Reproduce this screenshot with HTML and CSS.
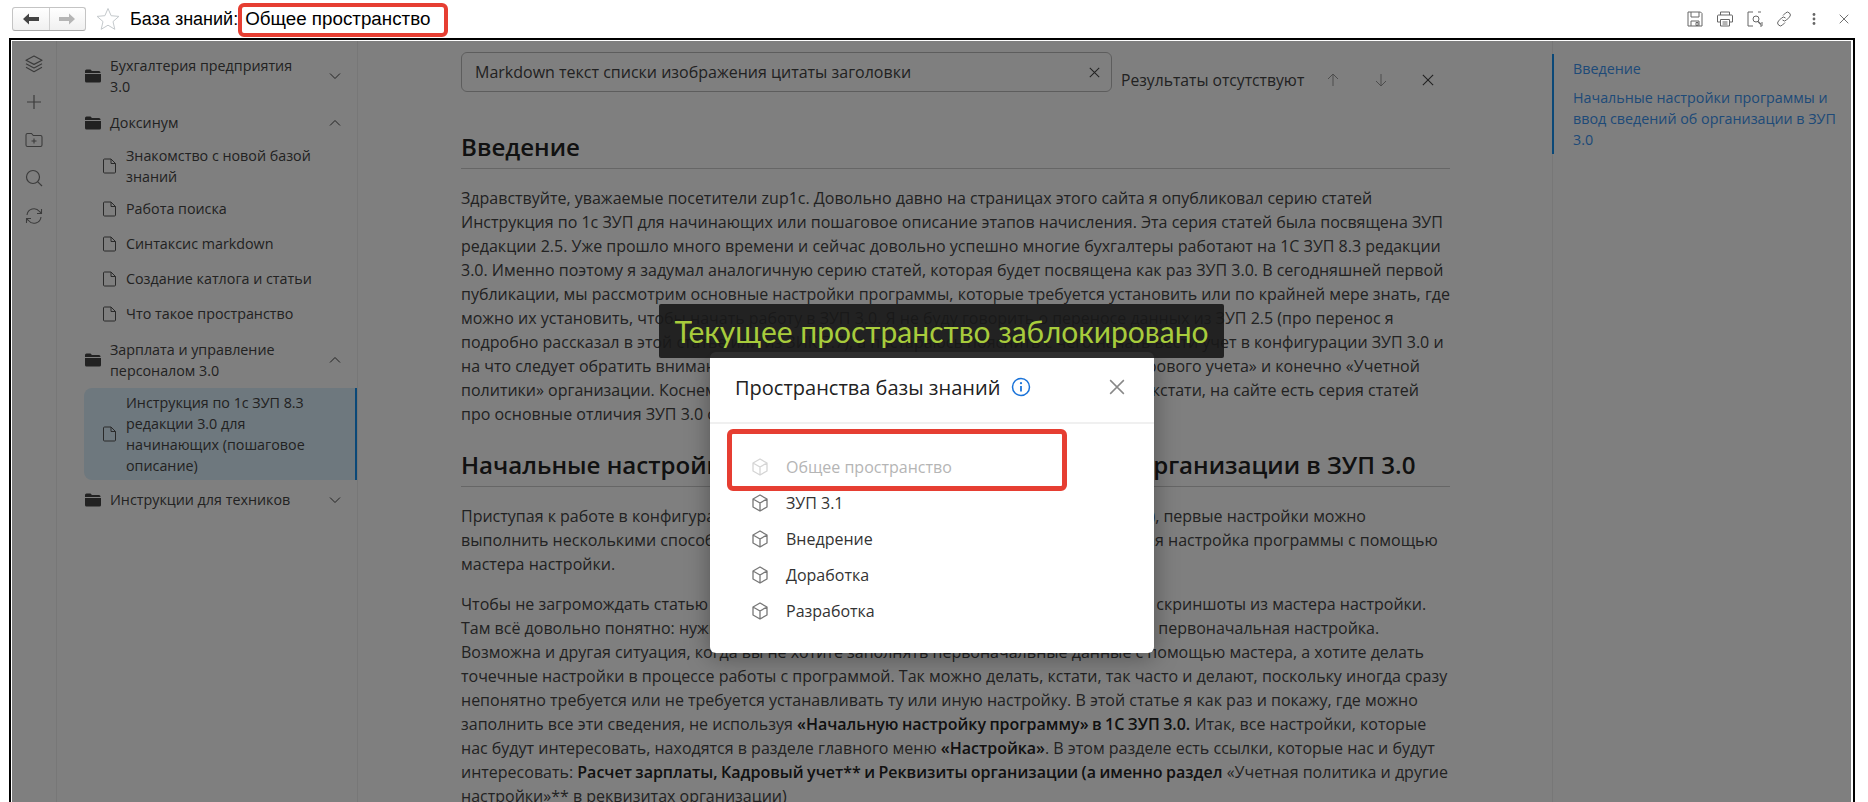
FILE: index.html
```html
<!DOCTYPE html>
<html lang="ru">
<head>
    <meta charset="UTF-8">
    <title>База знаний: Общее пространство</title>
    <link rel="stylesheet" href="styles.css">
</head>
<body>
    <svg class="icon-defs" width="0" height="0">
        <symbol id="i-folder" viewBox="0 0 16 14"><path d="M0 2a1.500 1.500 0 0 1 1.500-1.500h4l1.500 1.500h7a1.500 1.500 0 0 1 1.500 1.500v.5h-15.500z M0 5h16v7a1.500 1.500 0 0 1-1.500 1.500h-13a1.500 1.500 0 0 1-1.500-1.500z" fill="currentColor"/></symbol>
        <symbol id="i-doc" viewBox="0 0 14 16"><path d="M1.500 1h6.500l4.500 4.500v8.500a1 1 0 0 1-1 1h-10a1 1 0 0 1-1-1v-12a1 1 0 0 1 1-1z M8 1v4.500h4.500" fill="none" stroke="currentColor" stroke-width="1"/></symbol>
        <symbol id="i-down" viewBox="0 0 12 8"><path d="M1 1.500l5 5 5-5" fill="none" stroke="currentColor" stroke-width="1"/></symbol>
        <symbol id="i-up" viewBox="0 0 12 8"><path d="M1 6.500l5-5 5 5" fill="none" stroke="currentColor" stroke-width="1"/></symbol>
        <symbol id="i-cube" viewBox="0 0 18 18"><path d="M9 1l7 4v8l-7 4-7-4v-8z M2 5l7 4 7-4 M9 9v8" fill="none" stroke="currentColor" stroke-width="1.300" stroke-linejoin="round"/></symbol>
        <symbol id="i-x" viewBox="0 0 14 14"><path d="M1 1l12 12M13 1l-12 12" fill="none" stroke="currentColor" stroke-width="1.300"/></symbol>
    </svg>

    <header class="toolbar">
        <div class="nav-buttons">
            <button class="nav-btn nav-back"><svg width="16" height="12" viewBox="0 0 16 12"><path d="M0 6l6-5.500v3.500h10v4h-10v3.500z" fill="currentColor"/></svg></button>
            <button class="nav-btn nav-forward"><svg width="16" height="12" viewBox="0 0 16 12"><path d="M16 6l-6-5.500v3.500h-10v4h10v3.500z" fill="currentColor"/></svg></button>
        </div>
        <svg class="star" width="24" height="24" viewBox="0 0 24 24"><path d="M12 1.500l3.100 7.200 7.800.7-5.900 5.200 1.800 7.700-6.800-4.100-6.800 4.100 1.800-7.700-5.900-5.200 7.800-.7z" fill="none" stroke="#c4c9cc" stroke-width="1"/></svg>
        <div class="page-title">База знаний: <span class="title-space">Общее пространство</span></div>
        <div class="toolbar-actions">
            <svg width="16" height="16" viewBox="0 0 16 16"><path d="M1 1h12.500l1.500 1.500v12.500h-14z M4 1v5h8v-5 M4 15v-5h8v5 M9 11.500h2v3h-2z" fill="none" stroke="#666" stroke-width="1"/></svg>
            <svg width="18" height="16" viewBox="0 0 18 16"><path d="M4.500 4v-3h9v3 M4.500 11h-3v-6a1 1 0 0 1 1-1h13a1 1 0 0 1 1 1v6h-3 M4.500 8.500h9v6.500h-9z M6.500 11h5M6.500 13h5" fill="none" stroke="#666" stroke-width="1"/></svg>
            <svg width="16" height="16" viewBox="0 0 16 16"><path d="M6 1h-5v14h5 M11 1h3 M15 11v4h-2" fill="none" stroke="#666" stroke-width="1"/><circle cx="9" cy="8" r="3" fill="none" stroke="#666"/><path d="M11 10.500l3 3" stroke="#666" stroke-width="1.400"/></svg>
            <svg width="16" height="16" viewBox="0 0 16 16"><path d="M7 4.500l2.500-2.500a2.800 2.800 0 0 1 4 4l-3 3a2.800 2.800 0 0 1-4 0 M9 11.500l-2.500 2.500a2.800 2.800 0 0 1-4-4l3-3a2.800 2.800 0 0 1 4 0" fill="none" stroke="#666" stroke-width="1"/></svg>
            <svg class="action-dots" width="4" height="12" viewBox="0 0 4 12"><circle cx="2" cy="1.500" r="1.400" fill="#666"/><circle cx="2" cy="6" r="1.400" fill="#666"/><circle cx="2" cy="10.500" r="1.400" fill="#666"/></svg>
            <svg class="action-close" width="10" height="10"><use href="#i-x"/></svg>
        </div>
    </header>

    <div class="frame">
        <nav class="rail">
            <svg width="20" height="20" viewBox="0 0 20 20"><path d="M10 2l8 4.200-8 4.200-8-4.200z M2 9.800l8 4.200 8-4.200 M2 13.200l8 4.500 8-4.500" fill="none" stroke="currentColor" stroke-width="1.200" stroke-linejoin="round"/></svg>
            <svg width="20" height="20" viewBox="0 0 20 20"><path d="M10 3v14M3 10h14" fill="none" stroke="currentColor" stroke-width="1.200"/></svg>
            <svg width="20" height="20" viewBox="0 0 20 20"><path d="M2 5a1.500 1.500 0 0 1 1.500-1.500h4l1.800 2h7.200a1.500 1.500 0 0 1 1.500 1.500v8a1.500 1.500 0 0 1-1.500 1.500h-13a1.500 1.500 0 0 1-1.500-1.500z M10 8.500v5M7.500 11h5" fill="none" stroke="currentColor" stroke-width="1.100"/></svg>
            <svg width="20" height="20" viewBox="0 0 20 20"><circle cx="9" cy="9" r="6.500" fill="none" stroke="currentColor" stroke-width="1.200"/><path d="M13.800 13.800l4.200 4.200" stroke="currentColor" stroke-width="1.200"/></svg>
            <svg width="20" height="20" viewBox="0 0 20 20"><path d="M3 9a7 7 0 0 1 12.500-3.500l2 2 M17.500 3v4.500h-4.500 M17 11a7 7 0 0 1-12.500 3.500l-2-2 M2.500 17v-4.500h4.500" fill="none" stroke="currentColor" stroke-width="1.100"/></svg>
        </nav>

        <aside class="tree">
            <div class="tree-group">
                <div class="tree-row folder">
                    <svg class="folder-icon"><use href="#i-folder"/></svg>
                    <span class="row-text">Бухгалтерия предприятия 3.0</span>
                    <svg class="chevron"><use href="#i-down"/></svg>
                </div>
            </div>
            <div class="tree-group">
                <div class="tree-row folder">
                    <svg class="folder-icon"><use href="#i-folder"/></svg>
                    <span class="row-text">Доксинум</span>
                    <svg class="chevron"><use href="#i-up"/></svg>
                </div>
                <div class="tree-row leaf">
                    <svg class="doc-icon"><use href="#i-doc"/></svg>
                    <span class="row-text">Знакомство с новой базой знаний</span>
                </div>
                <div class="tree-row leaf">
                    <svg class="doc-icon"><use href="#i-doc"/></svg>
                    <span class="row-text">Работа поиска</span>
                </div>
                <div class="tree-row leaf">
                    <svg class="doc-icon"><use href="#i-doc"/></svg>
                    <span class="row-text">Синтаксис markdown</span>
                </div>
                <div class="tree-row leaf">
                    <svg class="doc-icon"><use href="#i-doc"/></svg>
                    <span class="row-text">Создание катлога и статьи</span>
                </div>
                <div class="tree-row leaf">
                    <svg class="doc-icon"><use href="#i-doc"/></svg>
                    <span class="row-text">Что такое пространство</span>
                </div>
            </div>
            <div class="tree-group">
                <div class="tree-row folder">
                    <svg class="folder-icon"><use href="#i-folder"/></svg>
                    <span class="row-text">Зарплата и управление персоналом 3.0</span>
                    <svg class="chevron"><use href="#i-up"/></svg>
                </div>
                <div class="tree-row leaf active">
                    <svg class="doc-icon"><use href="#i-doc"/></svg>
                    <span class="row-text">Инструкция по 1с ЗУП 8.3 редакции 3.0 для начинающих (пошаговое описание)</span>
                </div>
            </div>
            <div class="tree-group">
                <div class="tree-row folder">
                    <svg class="folder-icon"><use href="#i-folder"/></svg>
                    <span class="row-text">Инструкции для техников</span>
                    <svg class="chevron"><use href="#i-down"/></svg>
                </div>
            </div>
        </aside>

        <main class="article">
            <div class="search-row">
                <div class="search-input">
                    <span>Markdown текст списки изображения цитаты заголовки</span>
                    <svg class="search-x"><use href="#i-x"/></svg>
                </div>
                <div class="search-result">
                    <span class="result-text">Результаты отсутствуют</span>
                    <svg class="arrow" width="12" height="14" viewBox="0 0 12 14"><path d="M6 13v-12M1 6l5-5 5 5" fill="none" stroke="currentColor"/></svg>
                    <svg class="arrow arrow-down" width="12" height="14" viewBox="0 0 12 14"><path d="M6 1v12M1 8l5 5 5-5" fill="none" stroke="currentColor"/></svg>
                    <svg class="result-x"><use href="#i-x"/></svg>
                </div>
            </div>

            <h2>Введение</h2>
            <p>Здравствуйте, уважаемые посетители zup1c. Довольно давно на страницах этого сайта я опубликовал серию статей Инструкция по 1с ЗУП для начинающих или пошаговое описание этапов начисления. Эта серия статей была посвящена ЗУП редакции 2.5. Уже прошло много времени и сейчас довольно успешно многие бухгалтеры работают на 1С ЗУП 8.3 редакции 3.0. Именно поэтому я задумал аналогичную серию статей, которая будет посвящена как раз ЗУП 3.0. В сегодняшней первой публикации, мы рассмотрим основные настройки программы, которые требуется установить или по крайней мере знать, где можно их установить, чтобы начать работу в ЗУП 3.0. Я не буду говорить о переносе данных из ЗУП 2.5 (про перенос я подробно рассказал в этой статье или из ЗИК 7.7), а постараюсь пояснить с чего начать вести учет в конфигурации ЗУП 3.0 и на что следует обратить внимание при заполнении настроек «Расчета зарплаты», «Кадрового учета» и конечно «Учетной политики» организации. Коснемся также и ряда отличий настроек от ЗУП 2.5 и ЗУП 3.0 (кстати, на сайте есть серия статей про основные отличия ЗУП 3.0 от ЗУП 2.5).</p>

            <h2>Начальные настройки программы и ввод сведений об организации в ЗУП 3.0</h2>
            <p>Приступая к работе в конфигурации ЗУП 3.0 (в этой статье рассматривается релиз 3.1.0.), первые настройки можно выполнить несколькими способами. Самый очевидный вариант сейчас — это начальная настройка программы с помощью мастера настройки.</p>
            <p>Чтобы не загромождать статью лишним, я не стану здесь приводить и комментировать скриншоты из мастера настройки. Там всё довольно понятно: нужно просто идти по шагам, и в итоге будет выполнена эта первоначальная настройка. Возможна и другая ситуация, когда вы не хотите заполнять первоначальные данные с помощью мастера, а хотите делать точечные настройки в процессе работы с программой. Так можно делать, кстати, так часто и делают, поскольку иногда сразу непонятно требуется или не требуется устанавливать ту или иную настройку. В этой статье я как раз и покажу, где можно заполнить все эти сведения, не используя <strong>«Начальную настройку программу» в 1С ЗУП 3.0.</strong> Итак, все настройки, которые нас будут интересовать, находятся в разделе главного меню <strong>«Настройка»</strong>. В этом разделе есть ссылки, которые нас и будут интересовать: <strong>Расчет зарплаты, Кадровый учет** и Реквизиты организации (а именно раздел</strong> «Учетная политика и другие настройки»** в реквизитах организации)</p>
        </main>

        <aside class="toc">
            <div class="toc-list">
                <div class="toc-link">Введение</div>
                <div class="toc-link">Начальные настройки программы и ввод сведений об организации в ЗУП 3.0</div>
            </div>
        </aside>

        <div class="overlay"></div>
    </div>

    <div class="modal">
        <div class="modal-head">
            <span class="modal-title">Пространства базы знаний</span>
            <svg class="info-icon" width="20" height="20" viewBox="0 0 20 20"><circle cx="10" cy="10" r="8.500" fill="none" stroke="#1a73d9" stroke-width="1.500"/><path d="M10 9v5.500" stroke="#1a73d9" stroke-width="1.800"/><circle cx="10" cy="6.200" r="1.100" fill="#1a73d9"/></svg>
            <svg class="modal-close"><use href="#i-x"/></svg>
        </div>
        <div class="space-list">
            <div class="space-row locked"><svg class="cube"><use href="#i-cube"/></svg>Общее пространство</div>
            <div class="space-row"><svg class="cube"><use href="#i-cube"/></svg>ЗУП 3.1</div>
            <div class="space-row"><svg class="cube"><use href="#i-cube"/></svg>Внедрение</div>
            <div class="space-row"><svg class="cube"><use href="#i-cube"/></svg>Доработка</div>
            <div class="space-row"><svg class="cube"><use href="#i-cube"/></svg>Разработка</div>
        </div>
        <div class="space-mark"></div>
    </div>

    <div class="banner">Текущее пространство заблокировано</div>
    <div class="title-mark"></div>
</body>
</html>
```

FILE: styles.css
```css
html, body {
    margin: 0;
    height: 100%;
}

body {
    position: relative;
    height: 802px;
    overflow: hidden;
    background: #fff;
    font-family: "Open Sans", sans-serif;
    font-size: 16px;
    color: #3a3a3a;
}

.icon-defs {
    position: absolute;
}

/* top bar */
.toolbar {
    display: flex;
    align-items: center;
    height: 38px;
    padding: 0 19px 0 12px;
    box-sizing: border-box;
}

.nav-buttons {
    display: flex;
    width: 74px;
    height: 24px;
    box-sizing: border-box;
    border: 1px solid #c4c4c4;
    border-bottom-color: #a8a8a8;
    border-radius: 3px;
    background: linear-gradient(#fff, #f0f0f0);
}

.nav-btn {
    flex: 1;
    display: flex;
    align-items: center;
    justify-content: center;
    padding: 0;
    border: none;
    background: none;
}

.nav-back {
    color: #444;
    border-right: 1px solid #cfcfcf;
}

.nav-forward {
    color: #b5b5b5;
}

.star {
    margin-left: 10px;
}

.page-title {
    margin-left: 10px;
    font-family: "Liberation Sans", sans-serif;
    font-size: 18px;
    color: #000;
    white-space: pre;
}

.title-space {
    margin-left: 2px;
    font-size: 18.8px;
}

.toolbar-actions {
    margin-left: auto;
    display: flex;
    align-items: center;
    gap: 13px;
}

.action-dots {
    margin-left: 7px;
}

.action-close {
    margin-left: 10px;
    color: #666;
}

/* frame with dimmed page */
.frame {
    position: relative;
    display: flex;
    margin-left: 9px;
    width: 1846px;
    height: 790px;
    box-sizing: border-box;
    border: 2px solid #000;
    padding: 1px;
}

.overlay {
    position: absolute;
    inset: 1px 2px 1px 1px;
    background: rgba(0, 0, 0, 0.5);
}

.rail {
    flex: none;
    width: 45px;
    box-sizing: border-box;
    padding-top: 13px;
    border-right: 1px solid #eee;
    display: flex;
    flex-direction: column;
    align-items: center;
    gap: 18px;
    color: #777;
}

.tree {
    flex: none;
    width: 301px;
    box-sizing: border-box;
    padding: 10px 0 0 27px;
    border-right: 1px solid #eee;
    font-size: 14.3px;
    line-height: 21px;
    color: #444;
}

.tree-group {
    margin-bottom: 4px;
}

.tree-row {
    display: flex;
    align-items: center;
    min-height: 35px;
    box-sizing: border-box;
    padding: 4px 0;
}

.folder {
    margin-bottom: 1px;
}

.folder-icon {
    flex: none;
    width: 16px;
    height: 14px;
    margin: 0 9px 0 1px;
    color: #444;
}

.folder .row-text {
    width: 200px;
}

.chevron {
    flex: none;
    width: 12px;
    height: 8px;
    margin-left: 19px;
    color: #444;
}

.leaf {
    padding-left: 19px;
}

.doc-icon {
    flex: none;
    width: 14px;
    height: 16px;
    margin-right: 9px;
    color: #555;
}

.leaf .row-text {
    width: 200px;
}

.active {
    margin: 3px 0 -2px;
    background: #dcf0fc;
    border-right: 2px solid #1490f0;
    border-radius: 8px 0 0 8px;
}

.article {
    flex: 1;
    min-width: 0;
    box-sizing: border-box;
    padding: 11px 102px 0 103px;
    line-height: 24px;
    color: #444;
}

.search-row {
    display: flex;
    align-items: flex-end;
    margin-bottom: 40px;
}

.search-input {
    display: flex;
    align-items: center;
    justify-content: space-between;
    width: 651px;
    height: 40px;
    box-sizing: border-box;
    padding: 0 11px 0 13px;
    border: 1px solid #bbb;
    border-radius: 6px;
}

.search-x {
    width: 11px;
    height: 11px;
    color: #444;
}

.search-result {
    display: flex;
    align-items: center;
    margin-left: 9px;
    height: 24px;
    font-size: 15.7px;
}

.arrow {
    margin-left: 23px;
    color: #999;
}

.arrow-down {
    margin-left: 36px;
}

.result-x {
    width: 12px;
    height: 12px;
    margin-left: 35px;
    color: #444;
}

h2 {
    margin: 24px 0 17px;
    padding-bottom: 6px;
    border-bottom: 1px solid #ccc;
    font-size: 24.1px;
    line-height: 30px;
    font-weight: 600;
    color: #222;
}

p {
    margin: 0 0 16px;
}

strong {
    font-weight: 600;
    word-spacing: -0.7px;
    color: #222;
}

.toc {
    flex: none;
    width: 300px;
    box-sizing: border-box;
    padding-top: 13px;
    border-left: 1px solid #eee;
    font-size: 14.3px;
}

.toc-list {
    border-left: 2px solid #1490f0;
    margin-left: -1px;
    height: 100px;
    box-sizing: border-box;
    padding: 4px 10px 0 19px;
    line-height: 21px;
    color: #3c94f0;
}

.toc-link {
    margin-bottom: 8px;
}

/* dialog */
.modal {
    position: absolute;
    left: 710px;
    top: 352px;
    width: 444px;
    height: 301px;
    background: #fff;
    border-radius: 6px;
    box-shadow: 0 4px 24px rgba(0, 0, 0, 0.35);
    color: #333;
}

.modal-head {
    display: flex;
    align-items: center;
    height: 72px;
    box-sizing: border-box;
    padding: 0 29px 0 25px;
    border-bottom: 2px solid #f0f0f0;
}

.modal-title {
    font-size: 20px;
    color: #222;
}

.info-icon {
    margin-left: 11px;
}

.modal-close {
    width: 16px;
    height: 16px;
    margin-left: auto;
    color: #888;
}

.space-list {
    padding-top: 25px;
}

.space-row {
    display: flex;
    align-items: center;
    height: 36px;
    padding-left: 41px;
}

.cube {
    width: 18px;
    height: 18px;
    margin-right: 17px;
    color: #777;
}

.locked {
    color: #b5b5b5;
}

.locked .cube {
    color: #d5d5d5;
}

.space-mark {
    position: absolute;
    left: 17px;
    top: 77px;
    width: 340px;
    height: 62px;
    box-sizing: border-box;
    border: 5px solid #e63e32;
    border-radius: 6px;
}

.banner {
    position: absolute;
    left: 659px;
    top: 304px;
    width: 565px;
    height: 54px;
    display: flex;
    align-items: center;
    justify-content: center;
    background: rgba(24, 24, 24, 0.9);
    border-radius: 2px;
    font-family: "Lato", sans-serif;
    font-size: 30px;
    color: #a8cc3c;
}

.title-mark {
    position: absolute;
    left: 238px;
    top: 3px;
    width: 210px;
    height: 34px;
    box-sizing: border-box;
    border: 4px solid #e63e32;
    border-radius: 6px;
}
```
